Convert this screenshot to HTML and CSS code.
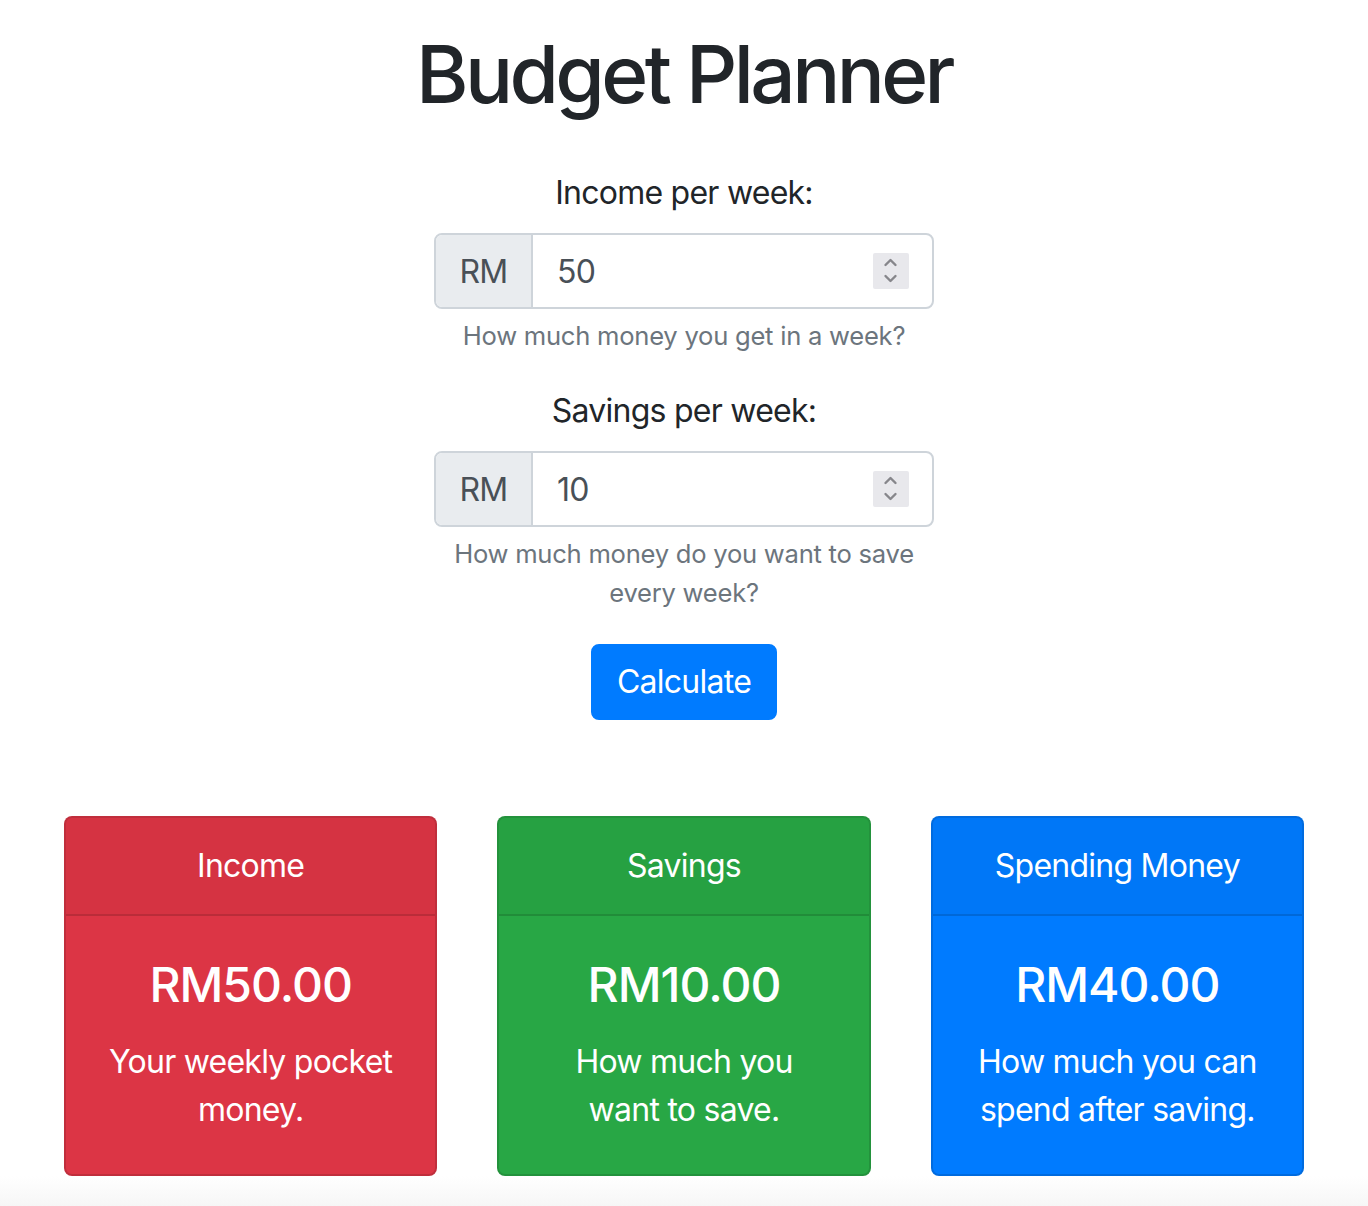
FILE: index.html
```html
<!DOCTYPE html>
<html lang="en">
<head>
<meta charset="utf-8">
<title>Budget Planner</title>
<link rel="stylesheet" href="styles.css">
</head>
<body>
<main class="page">
  <h1 class="title">Budget Planner</h1>
  <form class="planner-form">
    <div class="form-group">
      <label class="field-label" for="income">Income per week:</label>
      <div class="input-group">
        <span class="prepend">RM</span>
        <input class="field-input" id="income" type="text" value="50">
        <span class="spinner"><svg width="36" height="36" viewBox="0 0 36 36"><path d="M12.5 12 L17.5 7 L22.5 12" /><path d="M12.5 23 L17.5 28 L22.5 23" /></svg></span>
      </div>
      <small class="help-text">How much money you get in a week?</small>
    </div>
    <div class="form-group">
      <label class="field-label" for="savings">Savings per week:</label>
      <div class="input-group">
        <span class="prepend">RM</span>
        <input class="field-input" id="savings" type="text" value="10">
        <span class="spinner"><svg width="36" height="36" viewBox="0 0 36 36"><path d="M12.5 12 L17.5 7 L22.5 12" /><path d="M12.5 23 L17.5 28 L22.5 23" /></svg></span>
      </div>
      <small class="help-text">How much money do you want to save every week?</small>
    </div>
    <div class="form-group">
      <button class="btn-calc" type="button">Calculate</button>
    </div>
  </form>

  <section class="cards">
    <div class="card card-red">
      <div class="card-header">Income</div>
      <div class="card-body">
        <h4 class="card-title">RM50.00</h4>
        <p class="card-text">Your weekly pocket money.</p>
      </div>
    </div>
    <div class="card card-green">
      <div class="card-header">Savings</div>
      <div class="card-body">
        <h4 class="card-title">RM10.00</h4>
        <p class="card-text">How much you want to save.</p>
      </div>
    </div>
    <div class="card card-blue">
      <div class="card-header">Spending Money</div>
      <div class="card-body">
        <h4 class="card-title">RM40.00</h4>
        <p class="card-text">How much you can spend after saving.</p>
      </div>
    </div>
  </section>
  <div class="shade"></div>
</main>
</body>
</html>
```
FILE: styles.css
```css
* { box-sizing: border-box; }

html, body {
  margin: 0;
  padding: 0;
  background: #fff;
}

body {
  font-family: Inter, "Noto Sans", "Liberation Sans", sans-serif;
  color: #212529;
  -webkit-font-smoothing: antialiased;
}

.page {
  text-align: center;
}

.title {
  font-size: 80px;
  font-weight: 500;
  line-height: 1.2;
  margin: 26px 0 47px;
  letter-spacing: -3.6px;
}

.planner-form {
  width: 500px;
  margin: 0 auto;
  padding-bottom: 64px;
}

.form-group {
  margin-bottom: 32px;
}

.field-label {
  display: block;
  font-size: 32px;
  line-height: 48px;
  margin-bottom: 16px;
  letter-spacing: -0.75px;
}

.input-group {
  display: flex;
  align-items: center;
  height: 76px;
  border: 2px solid #ced4da;
  border-radius: 8px;
  overflow: hidden;
  background: #fff;
  text-align: left;
}

.prepend {
  width: 97px;
  height: 100%;
  display: flex;
  align-items: center;
  justify-content: center;
  background: #e9ecef;
  border-right: 2px solid #ced4da;
  font-size: 32px;
  color: #495057;
  letter-spacing: -0.75px;
}

.field-input {
  flex: 1;
  min-width: 0;
  height: 100%;
  border: none;
  outline: none;
  background: transparent;
  padding: 0 24px;
  font-family: inherit;
  font-size: 32px;
  color: #495057;
  letter-spacing: -0.75px;
}

.spinner {
  width: 36px;
  height: 36px;
  margin-right: 23px;
  background: #e8e8ec;
  border-radius: 2px;
  display: flex;
}

.spinner path {
  fill: none;
  stroke: #86868b;
  stroke-width: 2.4;
  stroke-linecap: round;
  stroke-linejoin: round;
}

.help-text {
  display: block;
  margin-top: 8px;
  font-size: 25.6px;
  line-height: 38.4px;
  color: #6c757d;
  letter-spacing: -0.25px;
}

.btn-calc {
  font-family: inherit;
  font-size: 32px;
  line-height: 48px;
  padding: 12px 24px;
  color: #fff;
  background: #007bff;
  border: 2px solid #007bff;
  border-radius: 8px;
  letter-spacing: -0.75px;
  cursor: pointer;
}

.cards {
  display: grid;
  grid-template-columns: repeat(3, 1fr);
  gap: 60px;
  padding: 0 64px;
}

.card {
  border: 2px solid rgba(0, 0, 0, 0.125);
  border-radius: 8px;
  color: #fff;
  overflow: hidden;
}

.card-red { background: #dc3545; }
.card-green { background: #28a745; }
.card-blue { background: #007bff; }

.card-header {
  padding: 24px 40px;
  font-size: 32px;
  line-height: 48px;
  letter-spacing: -0.75px;
  background: rgba(0, 0, 0, 0.03);
  border-bottom: 2px solid rgba(0, 0, 0, 0.125);
}

.card-body {
  padding: 40px;
}

.card-title {
  font-size: 48px;
  font-weight: 500;
  line-height: 1.2;
  letter-spacing: -1px;
  margin: 0 0 24px;
}

.card-text {
  font-size: 32px;
  line-height: 48px;
  letter-spacing: -0.75px;
  margin: 0;
}

.shade {
  height: 31px;
  background: linear-gradient(to bottom, #ffffff, #f6f6f6);
}
```
